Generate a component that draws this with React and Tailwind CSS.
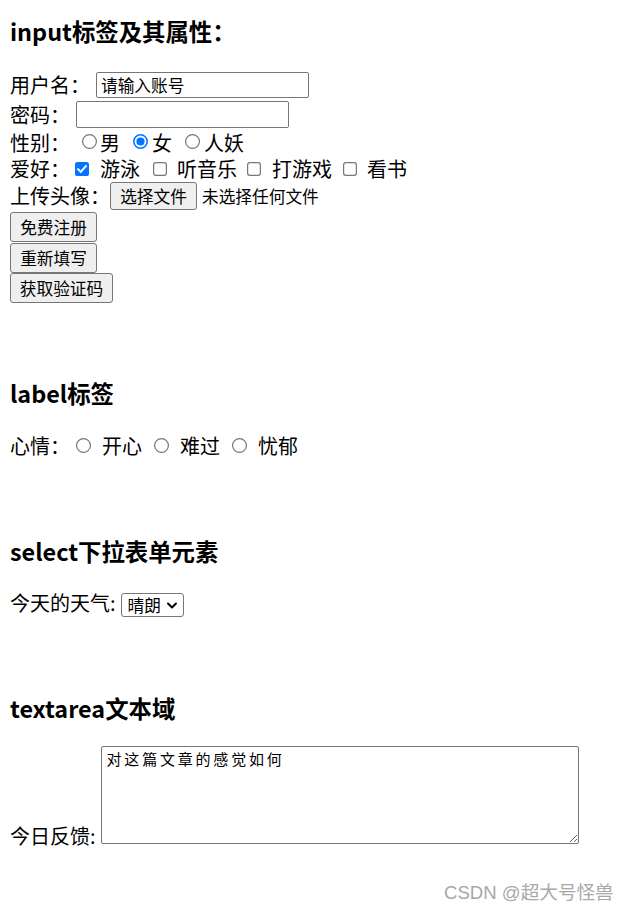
import React from "react";

function Chevron() {
  return (
    <svg width="10" height="7" viewBox="0 0 10 7" className="ml-[6px]">
      <path d="M1 1.5 L5 5.5 L9 1.5" fill="none" stroke="#000" strokeWidth="1.9" strokeLinecap="round" strokeLinejoin="round" />
    </svg>
  );
}

function Radio({ checked, className }) {
  return (
    <svg width="15" height="15" viewBox="0 0 15 15" className={className} role="radio" aria-checked={checked ? "true" : "false"}>
      {checked ? (
        <>
          <circle cx="7.5" cy="7.5" r="6.7" fill="#fff" stroke="#0075ff" strokeWidth="1.6" />
          <circle cx="7.5" cy="7.5" r="4.1" fill="#0075ff" />
        </>
      ) : (
        <circle cx="7.5" cy="7.5" r="6.9" fill="#fff" stroke="#767676" strokeWidth="1.2" />
      )}
    </svg>
  );
}

function Check({ checked, className }) {
  return (
    <svg width="14" height="14" viewBox="0 0 14 14" className={className} role="checkbox" aria-checked={checked ? "true" : "false"}>
      {checked ? (
        <>
          <rect x="0" y="0" width="14" height="14" rx="2.6" fill="#0075ff" />
          <path d="M3.1 7.3 L5.8 9.9 L10.9 4.2" fill="none" stroke="#fff" strokeWidth="2" strokeLinecap="square" />
        </>
      ) : (
        <rect x="0.6" y="0.6" width="12.8" height="12.8" rx="2.4" fill="#fff" stroke="#767676" strokeWidth="1.2" />
      )}
    </svg>
  );
}

export default function App() {
  return (
    <div className="relative w-full h-[913px] overflow-hidden bg-white text-black pl-[10px] font-['Noto_Sans_CJK_SC',sans-serif]">
      {/* Section 1 */}
      <h3 className="mt-[18px] h-[27px] leading-[27px] text-[23.4px] font-bold">input标签及其属性：</h3>
      <form className="mt-[26px] text-[20px]" onSubmit={(e) => e.preventDefault()}>
        <div className="flex items-center h-[27px]">
          <span className="leading-[27px]">用户名：</span>
          <input
            type="text"
            defaultValue="请输入账号"
            className="ml-[6px] w-[213px] h-[26px] border border-[#767676] rounded-[2px] px-[4px] text-[16.7px] leading-[24px] outline-none"
          />
        </div>
        <div className="flex items-center h-[33px]">
          <span className="leading-[33px]">密码：</span>
          <input
            type="password"
            className="ml-[6px] w-[213px] h-[27px] border border-[#767676] rounded-[2px] px-[4px] text-[16.7px] outline-none"
          />
        </div>
        <div className="flex items-center h-[24px]">
          <span className="leading-[24px]">性别：</span>
          <Radio className="ml-[12px] mr-[3px] mb-[3px]" />
          <span className="leading-[24px]">男</span>
          <Radio checked className="ml-[13px] mr-[4px] mb-[3px]" />
          <span className="leading-[24px]">女</span>
          <Radio className="ml-[13px] mr-[4px] mb-[3px]" />
          <span className="leading-[24px]">人妖</span>
        </div>
        <div className="flex items-center h-[27px]">
          <span className="leading-[27px]">爱好：</span>
          <Check checked className="ml-[5px] mr-[11px]" />
          <span className="leading-[27px]">游泳</span>
          <Check className="ml-[13px] mr-[10px]" />
          <span className="leading-[27px]">听音乐</span>
          <Check className="ml-[10px] mr-[11px]" />
          <span className="leading-[27px]">打游戏</span>
          <Check className="ml-[11px] mr-[10px]" />
          <span className="leading-[27px]">看书</span>
        </div>
        <div className="flex items-center h-[28px]">
          <span className="leading-[28px]">上传头像：</span>
          <button type="button" className="w-[87px] h-[28px] bg-[#efefef] border border-[#767676] rounded-[3px] text-[16.7px] leading-[26px]">
            选择文件
          </button>
          <span className="ml-[5px] text-[16.7px] leading-[28px]">未选择任何文件</span>
        </div>
        <div className="mt-[2px] flex">
          <button type="button" className="w-[87px] h-[30px] bg-[#efefef] border border-[#767676] rounded-[3px] text-[16.7px] leading-[28px]">
            免费注册
          </button>
        </div>
        <div className="mt-[1px] flex">
          <button type="reset" className="w-[87px] h-[30px] bg-[#efefef] border border-[#767676] rounded-[3px] text-[16.7px] leading-[28px]">
            重新填写
          </button>
        </div>
        <div className="flex">
          <button type="button" className="w-[103px] h-[30px] bg-[#efefef] border border-[#767676] rounded-[3px] text-[16.7px] leading-[28px]">
            获取验证码
          </button>
        </div>
      </form>

      {/* Section 2 */}
      <h3 className="mt-[77px] h-[27px] leading-[27px] text-[23.4px] font-bold">label标签</h3>
      <div className="mt-[25px] flex items-center h-[28px] text-[20px]">
        <span className="leading-[28px]">心情：</span>
        <Radio className="ml-[6px] mr-[11px] mb-[1px]" />
        <span className="leading-[28px]">开心</span>
        <Radio className="ml-[12px] mr-[11px] mb-[1px]" />
        <span className="leading-[28px]">难过</span>
        <Radio className="ml-[12px] mr-[11px] mb-[1px]" />
        <span className="leading-[28px]">忧郁</span>
      </div>

      {/* Section 3 */}
      <h3 className="mt-[78px] h-[27px] leading-[27px] text-[23.4px] font-bold">select下拉表单元素</h3>
      <div className="mt-[28px] flex items-center h-[24px] text-[20px]">
        <span className="leading-[24px] mb-[4px]">今天的天气:</span>
        <div className="ml-[5px] w-[63px] h-[24px] flex items-center border border-[#767676] rounded-[3px] pl-[6px] text-[16.7px] leading-[22px]">
          <span>晴朗</span>
          <Chevron />
        </div>
      </div>

      {/* Section 4 */}
      <h3 className="mt-[78px] h-[27px] leading-[27px] text-[23.4px] font-bold">textarea文本域</h3>
      <div className="mt-[24px] flex items-start text-[20px]">
        <span className="mt-[78px] leading-[24px]">今日反馈:</span>
        <textarea
          defaultValue="对这篇文章的感觉如何"
          className="ml-[5px] w-[478px] h-[98px] border border-[#767676] rounded-[2px] pl-[5px] pt-[2px] text-[15px] leading-[20px] tracking-[2.8px] resize outline-none"
        />
      </div>

      {/* Watermark */}
      <div className="absolute left-[444px] top-[880px] text-[18.6px] leading-[26px] text-[#a8a8a8] font-['Liberation_Sans','Noto_Sans_CJK_SC',sans-serif]">
        CSDN @超大号怪兽
      </div>
    </div>
  );
}
